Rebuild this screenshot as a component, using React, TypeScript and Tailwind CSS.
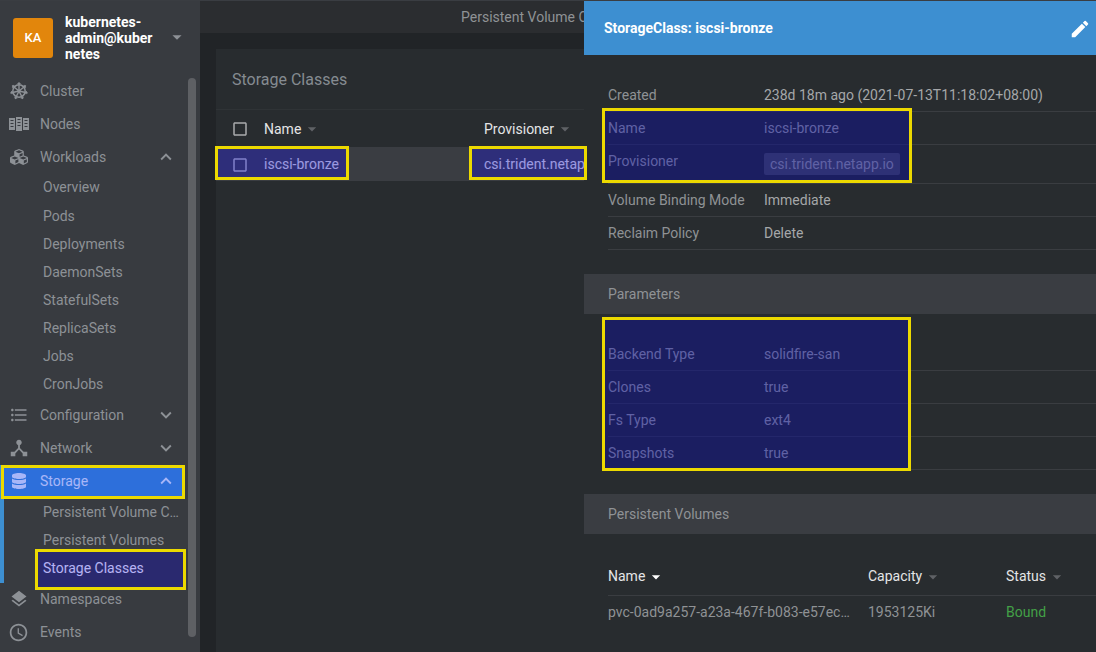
import { ReactNode } from "react";
import {
  MdAccessTime,
  MdArrowDropDown,
  MdCheckBoxOutlineBlank,
  MdCreate,
  MdDeviceHub,
  MdExpandLess,
  MdExpandMore,
  MdFormatListBulleted,
  MdLayers,
} from "react-icons/md";
import { FaCubes, FaDatabase } from "react-icons/fa";

function HelmIcon() {
  const spokes = [0, 51.4, 102.8, 154.2, 205.6, 257, 308.4];
  return (
    <svg width="20" height="20" viewBox="0 0 20 20" fill="none" stroke="currentColor">
      <circle cx="10" cy="10" r="6.2" strokeWidth="1.5" />
      <circle cx="10" cy="10" r="1.6" fill="currentColor" stroke="none" />
      {spokes.map((a) => (
        <g key={a} transform={`rotate(${a} 10 10)`}>
          <line x1="10" y1="10" x2="10" y2="1.2" strokeWidth="1.4" />
          <line x1="8.4" y1="2.6" x2="11.6" y2="2.6" strokeWidth="1" />
        </g>
      ))}
    </svg>
  );
}

function NodesIcon() {
  return (
    <svg width="20" height="14" viewBox="0 0 20 14" fill="currentColor">
      <path d="M0 1h6v12H0zM7 0h6v14H7zM14 1h6v12h-6z" />
      <path
        d="M1.5 3h3v1h-3zM1.5 6h3v1h-3zM1.5 9h3v1h-3zM8.5 2h3v1h-3zM8.5 5h3v1h-3zM8.5 8h3v1h-3zM15.5 3h3v1h-3zM15.5 6h3v1h-3zM15.5 9h3v1h-3z"
        fill="#383b40"
      />
    </svg>
  );
}

function NavItem({ icon, label, open, active }: { icon: ReactNode; label: string; open?: boolean; active?: boolean }) {
  return (
    <div className={`flex h-[33px] items-center ${active ? "w-[185px] bg-[#3d8fd1] pr-[8px] text-white" : "pr-[23px] text-[#8d9196]"}`}>
      <span className="flex w-[40px] shrink-0 items-center justify-center pr-[3px]">{icon}</span>
      <span className="flex-1 truncate">{label}</span>
      {open === true && <MdExpandLess size={22} />}
      {open === false && <MdExpandMore size={22} />}
    </div>
  );
}

function SubItems({ items, accent, current }: { items: string[]; accent?: boolean; current?: string }) {
  return (
    <div className={`border-l-4 pl-[39px] ${accent ? "border-[#3d8fd1] pt-px" : "border-transparent"}`}>
      {items.map((item) => (
        <div key={item} className={`flex h-[28px] items-center ${accent ? "" : "first:mb-px"}`}>
          <span className={`w-[136px] truncate ${item === current ? "text-white" : "text-[#8d9196]"}`}>{item}</span>
        </div>
      ))}
    </div>
  );
}

function HeadCell({ label, sorted, className }: { label: string; sorted?: boolean; className: string }) {
  return (
    <div className={`flex shrink-0 items-center text-[#e4e5e6] ${className}`}>
      <span>{label}</span>
      <MdArrowDropDown size={20} className={`ml-[1px] ${sorted ? "text-white" : "text-[#5f6266]"}`} />
    </div>
  );
}

function InfoRow({ label, children, tall, marked }: { label: string; children: ReactNode; tall?: boolean; marked?: boolean }) {
  return (
    <div
      className={`ml-[24px] flex border-b border-[#3a3d41] ${marked ? "text-[#a5a7a9]" : "text-[#8f9295]"} ${
        tall ? "h-[39px] pt-[6px]" : "h-[33px] items-center"
      }`}
    >
      <span className="w-[156px] shrink-0">{label}</span>
      {children}
    </div>
  );
}

function SectionTitle({ label }: { label: string }) {
  return (
    <div className="flex h-[40px] items-center bg-[#3a3d42] pl-[24px] text-[#8f9295]">{label}</div>
  );
}

// yellow annotation boxes drawn on top of the screenshot
function Mark({ className }: { className: string }) {
  return <div className={`pointer-events-none absolute border-[3px] border-[#ecd900] ${className}`} />;
}

export default function App() {
  return (
    <div className="relative flex h-[652px] w-[1096px] overflow-hidden border-t border-[#3a3d42] bg-[#212427] font-['Roboto',sans-serif] text-[14px]">
      {/* Sidebar */}
      <aside className="relative w-[200px] shrink-0 bg-[#383b40]">
        <div className="flex h-[73.5px] items-start pl-[13px] pt-[13px]">
          <div className="mt-[4px] flex h-[40px] w-[40px] shrink-0 items-center justify-center rounded-[3px] bg-[#e2860c] text-[13px] font-medium text-white">
            KA
          </div>
          <div className="ml-[12px] w-[88px] break-words font-bold leading-[16px] text-white">
            kubernetes-admin@kubernetes
          </div>
          <MdArrowDropDown size={22} className="ml-[13px] mt-[12px] text-[#8d9196]" />
        </div>
        <NavItem icon={<HelmIcon />} label="Cluster" />
        <NavItem icon={<NodesIcon />} label="Nodes" />
        <NavItem icon={<FaCubes size={18} />} label="Workloads" open />
        <SubItems items={["Overview", "Pods", "Deployments", "DaemonSets", "StatefulSets", "ReplicaSets", "Jobs", "CronJobs"]} />
        <NavItem icon={<MdFormatListBulleted size={20} />} label="Configuration" open={false} />
        <NavItem icon={<MdDeviceHub size={22} />} label="Network" open={false} />
        <NavItem icon={<FaDatabase size={16} />} label="Storage" open active />
        <SubItems accent current="Storage Classes" items={["Persistent Volume Claims", "Persistent Volumes", "Storage Classes"]} />
        <NavItem icon={<MdLayers size={20} />} label="Namespaces" />
        <NavItem icon={<MdAccessTime size={21} />} label="Events" />
        <div className="absolute left-[188px] top-[77px] h-[559px] w-[8px] rounded-full bg-[#5e6064]" />
      </aside>

      {/* Main content, cut off by the drawer */}
      <main className="w-[384px] shrink-0 overflow-hidden">
        <div className="flex h-[32px] items-center whitespace-nowrap bg-[#2b2d30] pl-[261px] text-[#8f9295]">
          Persistent Volume Claims
        </div>
        <section className="ml-[16px] mt-[16px] h-[610px] w-[400px] bg-[#282c2f]">
          <div className="flex h-[61px] items-center border-b border-[#2f3336] pl-[16px] pt-px text-[16px] text-[#858b91]">
            Storage Classes
          </div>
          <div className="flex h-[37px] items-center pt-px">
            <MdCheckBoxOutlineBlank size={18} className="ml-[15px] mr-[15px] shrink-0 text-[#a9abad]" />
            <HeadCell label="Name" className="w-[220px]" />
            <HeadCell label="Provisioner" className="w-[120px]" />
          </div>
          <div className="flex h-[34px] items-center whitespace-nowrap bg-[#3a3d42] pt-px text-white">
            <MdCheckBoxOutlineBlank size={18} className="ml-[15px] mr-[15px] shrink-0 text-[#d0d2d4]" />
            <span className="w-[220px] shrink-0">iscsi-bronze</span>
            <span>csi.trident.netapp.io</span>
          </div>
        </section>
      </main>

      {/* Drawer */}
      <div className="w-[512px] shrink-0 bg-[#282c2f]">
        <header className="flex h-[54px] items-center justify-between bg-[#3d8fd1] pl-[20px] pr-[5px] font-bold text-white">
          StorageClass: iscsi-bronze
          <MdCreate size={22} className="mt-[2px]" />
        </header>
        <div className="pt-[24px] text-[#a5a7a9]">
          <InfoRow label="Created">
            <span className="text-[#a5a7a9]">238d 18m ago (2021-07-13T11:18:02+08:00)</span>
          </InfoRow>
          <InfoRow label="Name" marked>
            <span className="text-[#a5a7a9]">iscsi-bronze</span>
          </InfoRow>
          <InfoRow label="Provisioner" tall marked>
            <span className="mt-[2px] h-[22px] rounded-[2px] bg-[#4c4f55] px-[6px] py-px text-[#a5a7a9]">csi.trident.netapp.io</span>
          </InfoRow>
          <InfoRow label="Volume Binding Mode">
            <span className="text-[#a5a7a9]">Immediate</span>
          </InfoRow>
          <InfoRow label="Reclaim Policy">
            <span className="text-[#a5a7a9]">Delete</span>
          </InfoRow>
        </div>
        <div className="mt-[24px]">
          <SectionTitle label="Parameters" />
          <div className="pt-[24px]">
            <InfoRow label="Backend Type" marked>
              <span className="text-[#a5a7a9]">solidfire-san</span>
            </InfoRow>
            <InfoRow label="Clones" marked>
              <span className="text-[#a5a7a9]">true</span>
            </InfoRow>
            <InfoRow label="Fs Type" marked>
              <span className="text-[#a5a7a9]">ext4</span>
            </InfoRow>
            <InfoRow label="Snapshots" marked>
              <span className="text-[#a5a7a9]">true</span>
            </InfoRow>
          </div>
        </div>
        <div className="mt-[24px]">
          <SectionTitle label="Persistent Volumes" />
          <div className="ml-[24px] mt-[24px] flex h-[38px] items-center border-b border-[#3a3d41]">
            <HeadCell label="Name" sorted className="w-[260px]" />
            <HeadCell label="Capacity" className="w-[138px]" />
            <HeadCell label="Status" className="w-[80px]" />
          </div>
          <div className="ml-[24px] flex h-[33px] items-center text-[#8f9295]">
            <span className="w-[260px] shrink-0 pr-[16px]">
              <span className="block truncate">pvc-0ad9a257-a23a-467f-b083-e57ec8a1f2d4</span>
            </span>
            <span className="w-[138px] shrink-0">1953125Ki</span>
            <span className="text-[#43a047]">Bound</span>
          </div>
        </div>
      </div>

      {/* Highlight overlays */}
      <Mark className="left-[1px] top-[464px] h-[34px] w-[184px] bg-[rgba(18,57,236,0.37)]" />
      <Mark className="left-[35px] top-[548px] h-[41px] w-[151px] bg-[rgba(10,0,223,0.3)]" />
      <Mark className="left-[215px] top-[145px] h-[34px] w-[134px] bg-[rgba(33,28,190,0.45)]" />
      <Mark className="left-[469px] top-[145px] h-[34px] w-[118px] bg-[rgba(33,28,190,0.45)]" />
      <Mark className="left-[602px] top-[107px] h-[75px] w-[310px] bg-[rgba(11,13,160,0.45)]" />
      <Mark className="left-[602px] top-[316px] h-[154px] w-[309px] bg-[rgba(11,13,160,0.45)]" />
    </div>
  );
}
